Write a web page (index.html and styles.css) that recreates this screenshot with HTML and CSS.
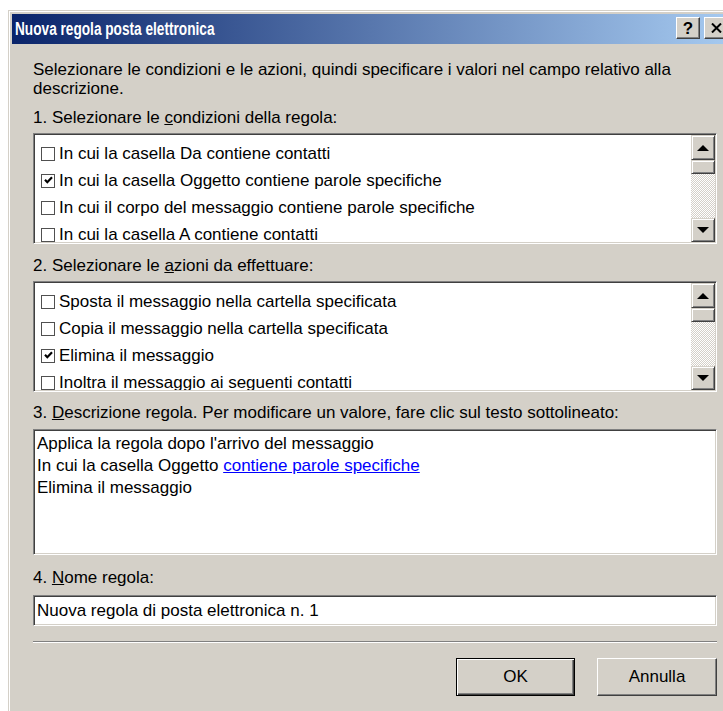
FILE: index.html
```html
<!DOCTYPE html>
<html lang="it">
<head>
<meta charset="utf-8">
<title>Nuova regola posta elettronica</title>
<link rel="stylesheet" href="styles.css">
</head>
<body>
<div class="window">
  <div class="titlebar">
    <span class="title">Nuova regola posta elettronica</span>
    <div class="caption-buttons">
      <span class="cbtn help">?</span>
      <span class="cbtn close">
        <svg width="11" height="10" viewBox="0 0 11 10"><path d="M1 0.5 L10 9.5 M10 0.5 L1 9.5" stroke="#000" stroke-width="2" fill="none"/></svg>
      </span>
    </div>
  </div>

  <div class="content">
    <p class="intro">Selezionare le condizioni e le azioni, quindi specificare i valori nel campo relativo alla<br>descrizione.</p>

    <div class="label label-first">1. Selezionare le <u>c</u>ondizioni della regola:</div>
    <div class="listbox">
      <div class="items">
        <div class="item"><span class="check"></span>In cui la casella Da contiene contatti</div>
        <div class="item"><span class="check"><svg width="11" height="11" viewBox="0 0 11 11"><path d="M2 4.8 L4.3 7.2 L9 2.2" stroke="#000" stroke-width="2.2" fill="none"/></svg></span>In cui la casella Oggetto contiene parole specifiche</div>
        <div class="item"><span class="check"></span>In cui il corpo del messaggio contiene parole specifiche</div>
        <div class="item"><span class="check"></span>In cui la casella A contiene contatti</div>
      </div>
      <div class="scrollbar">
        <div class="sb-btn"><span class="arrow-up"></span></div>
        <div class="sb-thumb"></div>
        <div class="sb-track"></div>
        <div class="sb-btn sb-down"><span class="arrow-down"></span></div>
      </div>
    </div>

    <div class="label label-second">2. Selezionare le <u>a</u>zioni da effettuare:</div>
    <div class="listbox">
      <div class="items">
        <div class="item"><span class="check"></span>Sposta il messaggio nella cartella specificata</div>
        <div class="item"><span class="check"></span>Copia il messaggio nella cartella specificata</div>
        <div class="item"><span class="check"><svg width="11" height="11" viewBox="0 0 11 11"><path d="M2 4.8 L4.3 7.2 L9 2.2" stroke="#000" stroke-width="2.2" fill="none"/></svg></span>Elimina il messaggio</div>
        <div class="item"><span class="check"></span>Inoltra il messaggio ai seguenti contatti</div>
      </div>
      <div class="scrollbar">
        <div class="sb-btn"><span class="arrow-up"></span></div>
        <div class="sb-thumb"></div>
        <div class="sb-track"></div>
        <div class="sb-btn sb-down"><span class="arrow-down"></span></div>
      </div>
    </div>

    <div class="label label-third">3. <u>D</u>escrizione regola. Per modificare un valore, fare clic sul testo sottolineato:</div>
    <div class="desc">
      <div>Applica la regola dopo l'arrivo del messaggio</div>
      <div>In cui la casella Oggetto <a class="link" href="#">contiene parole specifiche</a></div>
      <div>Elimina il messaggio</div>
    </div>

    <div class="label label-fourth">4. <u>N</u>ome regola:</div>
    <div class="name-input">Nuova regola di posta elettronica n. 1</div>

    <div class="separator"></div>

    <div class="actions">
      <div class="btn btn-default">OK</div>
      <div class="btn">Annulla</div>
    </div>
  </div>
</div>
</body>
</html>
```

FILE: styles.css
```css
html, body {
  margin: 0;
  padding: 0;
  overflow: hidden;
}

body {
  width: 723px;
  height: 711px;
  padding: 10px 0 0 8px;
  box-sizing: border-box;
  background: #fff;
  font-family: "Liberation Sans", Arial, sans-serif;
  font-size: 17px;
  color: #000;
}

/* classic raised window frame */
.window {
  box-sizing: border-box;
  width: 726px;
  height: 720px;
  padding: 3px;
  background: #d4d0c8;
  border: 1px solid;
  border-color: #d4d0c8 #404040 #404040 #d4d0c8;
  box-shadow: inset 1px 1px #fff, inset -1px -1px #808080;
}

.titlebar {
  height: 30px;
  display: flex;
  align-items: center;
  justify-content: space-between;
  padding: 0 2px 0 3px;
  background: linear-gradient(to right, #0a246a, #a6caf0);
}

.title {
  color: #fff;
  font-weight: bold;
  font-size: 17.5px;
  white-space: nowrap;
  transform: scaleX(0.78);
  transform-origin: left center;
}

.caption-buttons {
  display: flex;
  gap: 4px;
  align-self: flex-start;
  margin-top: 3px;
}

.cbtn {
  box-sizing: border-box;
  width: 24px;
  height: 22px;
  display: flex;
  align-items: center;
  justify-content: center;
  background: #d4d0c8;
  border: 1px solid;
  border-color: #fff #404040 #404040 #fff;
  box-shadow: inset -1px -1px #808080;
  font-weight: bold;
  font-size: 17px;
  line-height: 1;
}

.content {
  padding: 16px 13px 0 21px;
}

.intro {
  margin: 0;
  line-height: 19px;
  white-space: nowrap;
}

.label {
  line-height: 19px;
  white-space: nowrap;
}

.label-first { margin-top: 10px; }
.label-second { margin-top: 12px; }
.label-third { margin-top: 11px; }
.label-fourth { margin-top: 13px; }

/* sunken white field (list, text area, edit box) */
.listbox,
.desc,
.name-input {
  box-sizing: border-box;
  background: #fff;
  border: 1px solid;
  border-color: #808080 #fff #fff #808080;
  box-shadow: inset 1px 1px #404040, inset -1px -1px #d4d0c8;
}

.listbox {
  margin-top: 6px;
  height: 111px;
  display: flex;
  padding: 1px;
}

.items {
  flex: 1;
  overflow: hidden;
  padding: 5px 0 0 6px;
}

.item {
  height: 27px;
  display: flex;
  align-items: center;
  gap: 4px;
  white-space: nowrap;
}

.check {
  box-sizing: border-box;
  width: 14px;
  height: 14px;
  flex: none;
  border: 1px solid #505050;
  background: #fff;
  display: flex;
  align-items: center;
  justify-content: center;
}

/* vertical scrollbar */
.scrollbar {
  width: 24px;
  flex: none;
  display: flex;
  flex-direction: column;
}

.sb-btn,
.sb-thumb {
  box-sizing: border-box;
  background: #d4d0c8;
  border: 1px solid;
  border-color: #d4d0c8 #404040 #404040 #d4d0c8;
  box-shadow: inset 1px 1px #fff, inset -1px -1px #808080;
}

.sb-btn {
  height: 25px;
  flex: none;
  display: flex;
  align-items: center;
  justify-content: center;
}

.sb-down { height: 24px; }

.sb-thumb {
  height: 14px;
  flex: none;
}

.sb-track {
  flex: 1;
  background: repeating-conic-gradient(#fff 0 25%, #d4d0c8 0 50%) 0 0 / 2px 2px;
}

.arrow-up,
.arrow-down {
  width: 0;
  height: 0;
  border-left: 6px solid transparent;
  border-right: 6px solid transparent;
}

.arrow-up { border-bottom: 6px solid #000; }
.arrow-down { border-top: 6px solid #000; }

.desc {
  margin-top: 7px;
  height: 126px;
  padding: 3px 3px;
  line-height: 22px;
  white-space: nowrap;
}

.link {
  color: #0000ff;
  text-decoration: underline;
}

.name-input {
  margin-top: 8px;
  height: 31px;
  padding: 0 3px;
  display: flex;
  align-items: center;
  white-space: nowrap;
}

.separator {
  margin-top: 15px;
  height: 0;
  border-top: 1px solid #808080;
  border-bottom: 1px solid #fff;
}

.actions {
  margin-top: 15px;
  display: flex;
  justify-content: flex-end;
  gap: 22px;
}

.btn {
  box-sizing: border-box;
  width: 120px;
  height: 38px;
  display: flex;
  align-items: center;
  justify-content: center;
  background: #d4d0c8;
  border: 1px solid;
  border-color: #fff #404040 #404040 #fff;
  box-shadow: inset -1px -1px #808080;
}

.btn-default {
  width: 119px;
  border-color: #000;
  box-shadow: inset 1px 1px #fff, inset -1px -1px #404040, inset -2px -2px #808080;
}
```
